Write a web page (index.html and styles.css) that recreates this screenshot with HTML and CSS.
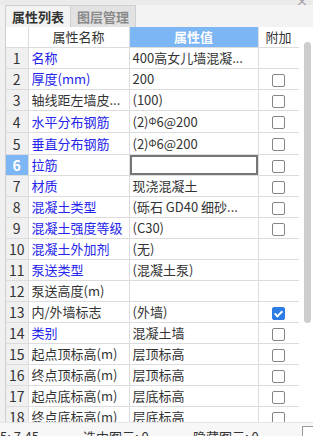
FILE: index.html
```html
<!DOCTYPE html>
<html lang="zh">
<head>
    <meta charset="UTF-8">
    <title>属性列表</title>
    <link rel="stylesheet" href="styles.css">
</head>
<body>

    <div class="topbar"><span class="close">×</span></div>

    <div class="panel">
        <div class="tabs">
            <div class="tab active">属性列表</div>
            <div class="tab">图层管理</div>
        </div>

        <div class="grid-area">
            <div class="table-wrap">
                <table>
                    <colgroup>
                        <col class="c-idx">
                        <col class="c-name">
                        <col class="c-val">
                        <col class="c-add">
                    </colgroup>
                    <thead>
                        <tr>
                            <th></th>
                            <th>属性名称</th>
                            <th class="th-val">属性值</th>
                            <th>附加</th>
                        </tr>
                    </thead>
                    <tbody>
                        <tr><td class="idx">1</td><td class="name blue">名称</td><td>400高女儿墙混凝...</td><td></td></tr>
                        <tr><td class="idx">2</td><td class="name blue">厚度(mm)</td><td>200</td><td><span class="chk"></span></td></tr>
                        <tr><td class="idx">3</td><td class="name">轴线距左墙皮...</td><td>(100)</td><td><span class="chk"></span></td></tr>
                        <tr><td class="idx">4</td><td class="name blue">水平分布钢筋</td><td>(2)<span class="bar">Φ</span>6@200</td><td><span class="chk"></span></td></tr>
                        <tr><td class="idx">5</td><td class="name blue">垂直分布钢筋</td><td>(2)<span class="bar">Φ</span>6@200</td><td><span class="chk"></span></td></tr>
                        <tr><td class="idx sel">6</td><td class="name blue">拉筋</td><td class="edit"><div class="edit-box"></div></td><td><span class="chk"></span></td></tr>
                        <tr><td class="idx">7</td><td class="name blue">材质</td><td>现浇混凝土</td><td><span class="chk"></span></td></tr>
                        <tr><td class="idx">8</td><td class="name blue">混凝土类型</td><td>(砾石 GD40 细砂...</td><td><span class="chk"></span></td></tr>
                        <tr><td class="idx">9</td><td class="name blue">混凝土强度等级</td><td>(C30)</td><td><span class="chk"></span></td></tr>
                        <tr><td class="idx">10</td><td class="name blue">混凝土外加剂</td><td>(无)</td><td></td></tr>
                        <tr><td class="idx">11</td><td class="name blue">泵送类型</td><td>(混凝土泵)</td><td></td></tr>
                        <tr><td class="idx">12</td><td class="name">泵送高度(m)</td><td></td><td></td></tr>
                        <tr><td class="idx">13</td><td class="name">内/外墙标志</td><td>(外墙)</td><td><span class="chk on"></span></td></tr>
                        <tr><td class="idx">14</td><td class="name blue">类别</td><td>混凝土墙</td><td><span class="chk"></span></td></tr>
                        <tr><td class="idx">15</td><td class="name">起点顶标高(m)</td><td>层顶标高</td><td><span class="chk"></span></td></tr>
                        <tr><td class="idx">16</td><td class="name">终点顶标高(m)</td><td>层顶标高</td><td><span class="chk"></span></td></tr>
                        <tr><td class="idx">17</td><td class="name">起点底标高(m)</td><td>层底标高</td><td><span class="chk"></span></td></tr>
                        <tr><td class="idx">18</td><td class="name">终点底标高(m)</td><td>层底标高</td><td><span class="chk"></span></td></tr>
                    </tbody>
                </table>
            </div>
            <div class="scrollbar"><div class="thumb"></div></div>
        </div>
    </div>

    <div class="status">
        <span class="st1">5: 7.45</span>
        <span class="st2">选中图元: 0</span>
        <span class="st3">隐藏图元: 0</span>
        <span class="st-box"></span>
    </div>

</body>
</html>
```

FILE: styles.css
```css
html, body {
    margin: 0;
    padding: 0;
}

body {
    width: 313px;
    height: 436px;
    overflow: hidden;
    display: flex;
    flex-direction: column;
    font-family: "Noto Sans CJK SC", "Noto Sans", sans-serif;
    font-size: 13px;
    color: #333;
    background-color: #f0f0f0;
}

.topbar {
    height: 5px;
    background-color: #ebebeb;
    position: relative;
    overflow: hidden;
}

.close {
    position: absolute;
    right: 4px;
    top: -10px;
    font-size: 14px;
    color: #999;
}

.panel {
    flex: 1;
    min-height: 0;
    display: flex;
    flex-direction: column;
    margin-left: 5px;
    border-left: 1px solid #cfcfcf;
    background-color: #fff;
}

.tabs {
    height: 22px;
    display: flex;
    background-color: #f3f3f3;
    box-sizing: border-box;
}

.tab {
    width: 65px;
    box-sizing: border-box;
    text-align: center;
    line-height: 21px;
    font-weight: bold;
    color: #8a8a8a;
    background-color: #e2e2e2;
    border: 1px solid #cfcfcf;
    border-bottom: none;
    border-left: none;
}

.tab.active {
    color: #333;
    background-color: #f3f3f3;
}

.grid-area {
    flex: 1;
    min-height: 0;
    display: flex;
}

.table-wrap {
    width: 293px;
    overflow: hidden;
}

table {
    width: 293px;
    table-layout: fixed;
    border-collapse: collapse;
}

.c-idx { width: 22px; }
.c-name { width: 101px; }
.c-val { width: 129px; }
.c-add { width: 41px; }

th, td {
    height: 20px;
    padding: 0 3px;
    border: 1px solid #dcdcdc;
    white-space: nowrap;
    overflow: hidden;
    line-height: 20px;
    font-size: 13px;
}

tr > :first-child {
    border-left: none;
}

th {
    font-weight: normal;
    text-align: center;
    background-color: #fff;
    border-top: none;
}

.th-val {
    background-color: #7db6f4;
    color: #fff;
    font-weight: bold;
}

td {
    color: #333;
}

.idx {
    background-color: #f0f0f0;
    text-align: center;
    font-size: 14px;
    padding: 0;
}

.idx.sel {
    background-color: #7db6f4;
    color: #fff;
    font-weight: bold;
}

.blue {
    color: #2424ec;
}

.bar {
    font-size: 10px;
    vertical-align: 2px;
}

.edit {
    padding: 0;
}

.edit-box {
    height: 16px;
    border: 2px solid #767676;
}

td:last-child {
    text-align: center;
    padding: 0;
}

.chk {
    display: inline-block;
    width: 11px;
    height: 11px;
    border: 1px solid #858585;
    border-radius: 2px;
    vertical-align: middle;
    background-color: #fff;
    position: relative;
}

.chk.on {
    background-color: #2d7ce6;
    border-color: #2d7ce6;
}

.chk.on::after {
    content: "";
    position: absolute;
    left: 3px;
    top: 1px;
    width: 3px;
    height: 6px;
    border: solid #fff;
    border-width: 0 2px 2px 0;
    transform: rotate(45deg);
}

.scrollbar {
    flex: 1;
    padding: 15px 2px 0 5px;
    background-color: #fff;
}

.thumb {
    width: 7px;
    height: 281px;
    border-radius: 4px;
    background-color: #cdcdcd;
}

.status {
    height: 14px;
    background-color: #f7f7f7;
    border-top: 1px solid #e6e6e6;
    display: flex;
    overflow: hidden;
    color: #333;
    font-size: 13px;
    line-height: 20px;
    padding-top: 4px;
    box-sizing: border-box;
    position: relative;
}

.st1 { width: 80px; }
.st2 { width: 110px; padding-left: 3px; }
.st3 { width: 100px; }

.st-box {
    position: absolute;
    left: 302px;
    top: 3px;
    width: 12px;
    height: 14px;
    border: 1px solid #999;
    background-color: #fff;
}
```
